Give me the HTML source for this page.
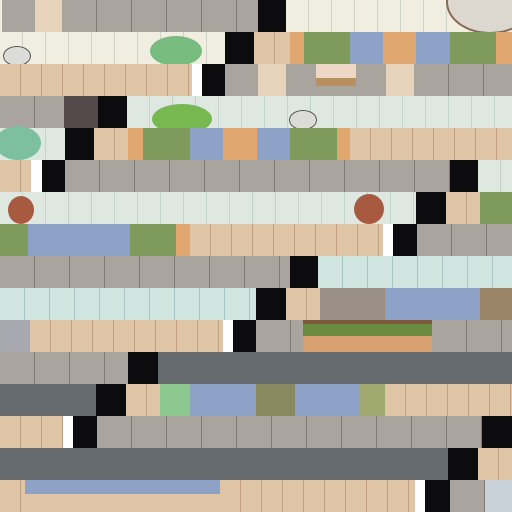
<!DOCTYPE html>
<html><head><style>
html,body{margin:0;padding:0;width:512px;height:512px;overflow:hidden;background:#a8a29c}
.r{position:absolute;left:0;width:512px;height:32px;display:flex}
.r>div{height:32px;flex:none;position:relative}
.g{background:#aaa49e repeating-linear-gradient(90deg,transparent 0 34px,#7e7a76 34px 35px)}
.c{background:#f0eee0 repeating-linear-gradient(90deg,transparent 0 22px,#d0d4c8 22px 23px)}
.t{background:#e0c4a6 repeating-linear-gradient(90deg,transparent 0 20px,#c0a080 20px 21px)}
.k{background:#0c0c0e}
.w{background:#fff}
.m{background:#dfe8e0 repeating-linear-gradient(90deg,transparent 0 22px,#c4d2cc 22px 23px)}
.p{background:#d0e4e0 repeating-linear-gradient(90deg,transparent 0 24px,#a8c4c4 24px 25px)}
.gr{background:#7e9a5c}
.b{background:#8ea2c8}
.o{background:#e0a870}
.lw{background:#e8d4bc}
.d{background:#646a6e}
.br{background:#8a6a50}
.ov{position:absolute;border-radius:50%}
</style></head><body>
<div class="r" style="top:0"><div class="c" style="width:2px"></div><div class="g" style="width:33px"></div><div class="lw" style="width:27px"></div><div class="g" style="width:196px"></div><div class="k" style="width:28px"></div><div class="c" style="width:226px"><div class="ov" style="left:160px;top:-30px;width:84px;height:60px;background:#dcd8d0;border:2px solid #8a6a50"></div></div></div>
<div class="r" style="top:32px"><div class="c" style="width:225px"><div class="ov" style="left:150px;top:4px;width:52px;height:30px;background:#78bc80"></div><div class="ov" style="left:3px;top:14px;width:26px;height:18px;background:#dcdcd8;border:1px solid #555"></div></div><div class="k" style="width:29px"></div><div class="t" style="width:36px"></div><div class="o" style="width:14px"></div><div class="gr" style="width:46px"></div><div class="b" style="width:33px"></div><div class="o" style="width:33px"></div><div class="b" style="width:34px"></div><div class="gr" style="width:46px"></div><div class="o" style="width:16px"></div></div>
<div class="r" style="top:64px"><div class="t" style="width:192px"></div><div class="w" style="width:10px"></div><div class="k" style="width:23px"></div><div class="g" style="width:33px"></div><div class="lw" style="width:28px"></div><div class="g" style="width:30px"></div><div class="lw" style="width:40px;background:linear-gradient(#ecd8c4 0 14px,#b89060 14px 22px,#aaa49e 22px)"></div><div class="g" style="width:30px"></div><div class="lw" style="width:28px"></div><div class="g" style="width:98px"></div></div>
<div class="r" style="top:96px"><div class="g" style="width:64px"></div><div style="width:34px;background:#544a4c"></div><div class="k" style="width:29px"></div><div class="m" style="width:385px"><div class="ov" style="left:25px;top:8px;width:60px;height:30px;background:#78b850"></div><div class="ov" style="left:162px;top:14px;width:26px;height:18px;background:#dcdcd8;border:1px solid #555"></div></div></div>
<div class="r" style="top:128px"><div class="m" style="width:65px"><div class="ov" style="left:-5px;top:-2px;width:46px;height:34px;background:#7cc0a0"></div></div><div class="k" style="width:29px"></div><div class="t" style="width:34px"></div><div class="o" style="width:15px"></div><div class="gr" style="width:47px"></div><div class="b" style="width:33px"></div><div class="o" style="width:34px"></div><div class="b" style="width:33px"></div><div class="gr" style="width:47px"></div><div class="o" style="width:13px"></div><div class="t" style="width:162px"></div></div>
<div class="r" style="top:160px"><div class="t" style="width:31px"></div><div class="w" style="width:11px"></div><div class="k" style="width:23px"></div><div class="g" style="width:385px"></div><div class="k" style="width:28px"></div><div class="m" style="width:34px"></div></div>
<div class="r" style="top:192px"><div class="m" style="width:416px"><div class="ov" style="left:8px;top:4px;width:26px;height:28px;background:#a85a40"></div><div class="ov" style="left:354px;top:2px;width:30px;height:30px;background:#a85a40"></div></div><div class="k" style="width:30px"></div><div class="t" style="width:34px"></div><div class="gr" style="width:32px"></div></div>
<div class="r" style="top:224px"><div class="gr" style="width:28px"></div><div class="b" style="width:102px"></div><div class="gr" style="width:46px"></div><div class="o" style="width:14px"></div><div class="t" style="width:193px"></div><div class="w" style="width:10px"></div><div class="k" style="width:24px"></div><div class="g" style="width:95px"></div></div>
<div class="r" style="top:256px"><div class="g" style="width:290px"></div><div class="k" style="width:28px"></div><div class="p" style="width:194px"></div></div>
<div class="r" style="top:288px"><div class="p" style="width:256px"></div><div class="k" style="width:30px"></div><div class="t" style="width:34px"></div><div style="width:65px;background:#9a9088"></div><div class="b" style="width:95px"></div><div style="width:32px;background:#9a8468"></div></div>
<div class="r" style="top:320px"><div style="width:30px;background:#a8a8b0"></div><div class="t" style="width:193px"></div><div class="w" style="width:10px"></div><div class="k" style="width:23px"></div><div class="g" style="width:47px"></div><div style="width:129px;background:linear-gradient(#7a5a3a 0 4px,#6a8a40 4px 16px,#d8a070 16px)"></div><div class="g" style="width:80px"></div></div>
<div class="r" style="top:352px"><div class="g" style="width:128px"></div><div class="k" style="width:30px"></div><div class="d" style="width:354px"></div></div>
<div class="r" style="top:384px"><div class="d" style="width:96px"></div><div class="k" style="width:30px"></div><div class="t" style="width:34px"></div><div style="width:30px;background:#8cc890"></div><div class="b" style="width:66px"></div><div style="width:39px;background:#8a8a60"></div><div class="b" style="width:65px"></div><div style="width:25px;background:#a0aa70"></div><div class="t" style="width:127px"></div></div>
<div class="r" style="top:416px"><div class="t" style="width:63px"></div><div class="w" style="width:10px"></div><div class="k" style="width:24px"></div><div class="g" style="width:385px"></div><div class="k" style="width:30px"></div></div>
<div class="r" style="top:448px"><div class="d" style="width:448px"></div><div class="k" style="width:30px"></div><div class="t" style="width:34px"></div></div>
<div class="r" style="top:480px"><div class="t" style="width:25px"></div><div style="width:195px;background:linear-gradient(#8ea2c8 0 14px,#e0c4a6 14px)"></div><div class="t" style="width:195px"></div><div class="w" style="width:10px"></div><div class="k" style="width:25px"></div><div class="g" style="width:35px"></div><div style="width:27px;background:#c8d0d8"></div></div>
</body></html>
